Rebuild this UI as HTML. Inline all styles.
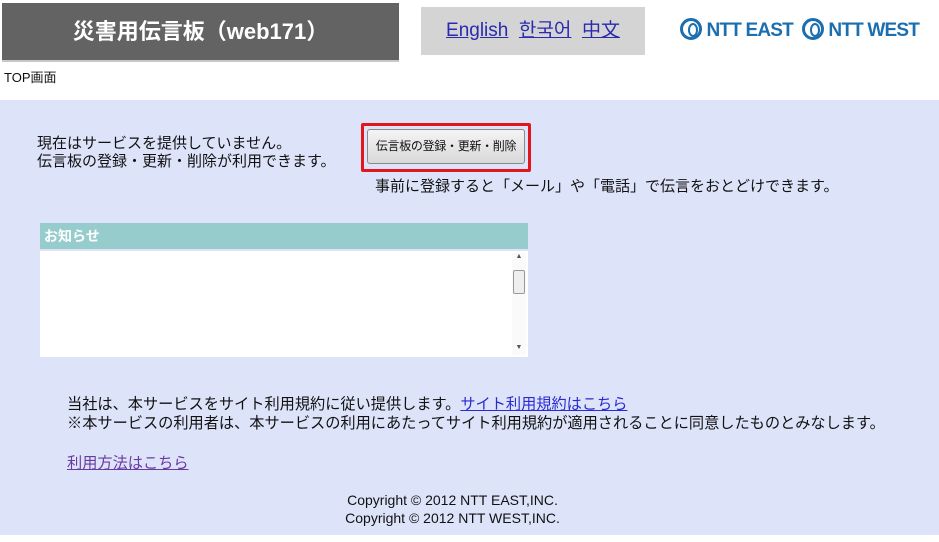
<!DOCTYPE html>
<html><head><meta charset="utf-8"><style>
body{margin:0;width:939px;height:542px;background:#fff;position:relative;overflow:hidden;font-family:"Liberation Sans","Noto Sans CJK JP",sans-serif;color:#111}
.a{position:absolute;white-space:nowrap}
a{color:#1a0dab;text-decoration:underline}
.lg{display:inline-block;width:22px;height:22px;border:3px solid #1b6fb0;border-radius:50%;box-sizing:border-box;vertical-align:-4px;position:relative}
.lg span{position:absolute;left:5px;top:2px;width:6px;height:10px;border:2px solid #1b6fb0;border-radius:50%}
</style></head><body>
<div class="a" style="left:2px;top:3px;width:397px;height:57px;background:#636363;border-bottom:2px solid #c8c8c8;color:#fff;font-size:22px;font-weight:bold;line-height:57px;text-align:center">災害用伝言板（web171）</div>
<div class="a" style="left:421px;top:7px;width:224px;height:48px;background:#d4d4d4;font-size:19px;line-height:48px;text-align:center"><a style="color:#2a2ab0">English</a>&nbsp; <a style="color:#2a2ab0">한국어</a>&nbsp; <a style="color:#2a2ab0">中文</a></div>
<div class="a" style="left:680px;top:18px;color:#1b6fb0;font-weight:bold;font-size:19px;letter-spacing:-0.8px">
<span class="lg"><span></span></span> NTT EAST&nbsp;&nbsp;<span class="lg"><span></span></span> NTT WEST</div>
<div class="a" style="left:4px;top:67px;font-size:13px">TOP画面</div>
<div class="a" style="left:0;top:100px;width:939px;height:435px;background:#dde4fa"></div>
<div class="a" style="left:37px;top:135px;font-size:15px;line-height:18px">現在はサービスを提供していません。<br>伝言板の登録・更新・削除が利用できます。</div>
<div class="a" style="left:361px;top:123px;width:164px;height:43px;border:3px solid #e3161b;border-radius:2px;background:#dde4fa"></div>
<div class="a" style="left:367px;top:129px;width:156px;height:33px;border:1px solid #8a8a8a;border-radius:3px;background:linear-gradient(#f4f4f4,#d9d9d9);font-size:12px;line-height:33px;text-align:center;letter-spacing:-0.3px">伝言板の登録・更新・削除</div>
<div class="a" style="left:375px;top:175px;font-size:15px">事前に登録すると「メール」や「電話」で伝言をおとどけできます。</div>
<div class="a" style="left:40px;top:223px;width:488px;height:26px;background:#96cccb;color:#fff;font-weight:bold;font-size:14px;line-height:26px;text-indent:4px">お知らせ</div>
<div class="a" style="left:40px;top:251px;width:488px;height:106px;background:#fff"></div>
<div class="a" style="left:512px;top:253px;width:14px;height:102px;background:#fafafa;font-size:7px;color:#555;text-align:center">▲</div>
<div class="a" style="left:513px;top:270px;width:10px;height:22px;border:1px solid #999;border-radius:2px;background:#eee"></div>
<div class="a" style="left:512px;top:344px;width:14px;font-size:7px;color:#555;text-align:center">▼</div>
<div class="a" style="left:67px;top:395px;font-size:15.2px;line-height:19px">当社は、本サービスをサイト利用規約に従い提供します。<a style="color:#2a2ad0">サイト利用規約はこちら</a><br>※本サービスの利用者は、本サービスの利用にあたってサイト利用規約が適用されることに同意したものとみなします。</div>
<div class="a" style="left:67px;top:451px;font-size:15.2px"><a style="color:#6a3aa0">利用方法はこちら</a></div>
<div class="a" style="left:0;width:905px;top:491px;font-size:14px;line-height:18px;text-align:center">Copyright © 2012 NTT EAST,INC.<br>Copyright © 2012 NTT WEST,INC.</div>
</body></html>
